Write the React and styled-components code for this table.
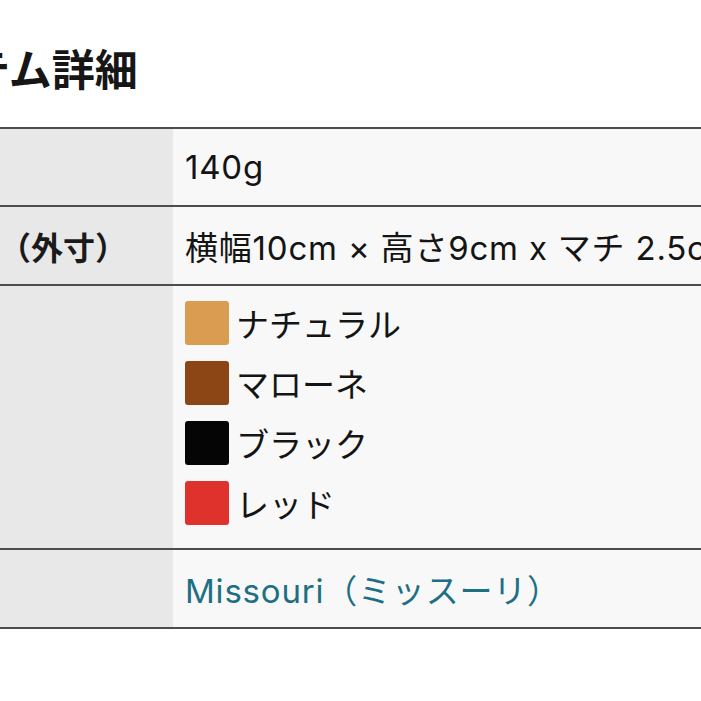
import styled, { createGlobalStyle } from 'styled-components'

const GlobalStyle = createGlobalStyle`
    html, body {
        margin: 0;
        padding: 0;
        background: #ffffff;
        overflow: hidden;
    }
    body {
        font-family: Inter, "Noto Sans CJK JP", sans-serif;
        color: #111111;
    }
`

const Page = styled.div`
    margin-left: -116px;
    padding-top: 41px;
    width: 1150px;
`

const Title = styled.h2`
    margin: 0 0 34px;
    font-family: "Noto Sans CJK JP", sans-serif;
    font-size: 43px;
    line-height: 52px;
    font-weight: 700;
    color: #161616;
`

const Table = styled.table`
    width: 100%;
    border-collapse: collapse;
    font-size: 33px;
`

const Row = styled.tr`
    border-top: 2px solid #4d4d4d;
    border-bottom: 2px solid #4d4d4d;
    height: ${props => props.$height}px;
`

const Label = styled.th`
    width: 269px;
    padding: 0 0 0 20px;
    background: #e8e8e8;
    text-align: left;
    font-weight: 700;
    font-family: "Noto Sans CJK JP", sans-serif;
    font-size: 32px;
    color: #1a1a1a;
    vertical-align: middle;
    white-space: nowrap;
`

const Value = styled.td`
    padding: 0 12px;
    background: #f8f8f8;
    vertical-align: middle;
    white-space: nowrap;
    letter-spacing: 0.8px;
    color: #141414;
`

const ColorList = styled.ul`
    list-style: none;
    margin: 0;
    padding: 0 0 8px;
    display: flex;
    flex-direction: column;
    gap: 16px;
`

const ColorItem = styled.li`
    display: flex;
    align-items: center;
    gap: 7px;
    font-family: "Noto Sans CJK JP", sans-serif;
    font-size: 33px;
    line-height: 44px;
    letter-spacing: 0;
`

const Swatch = styled.span`
    width: 44px;
    height: 44px;
    border-radius: 3px;
    background: ${props => props.$color};
    flex-shrink: 0;
`

const Link = styled.a`
    color: #1d7083;
    text-decoration: none;
`

const colors = [
    { name: 'ナチュラル', color: '#da9c51' },
    { name: 'マローネ', color: '#8c4514' },
    { name: 'ブラック', color: '#050505' },
    { name: 'レッド', color: '#e0322c' },
]

const App = () => {
    return (
        <Page>
            <GlobalStyle />
            <Title>アイテム詳細</Title>
            <Table>
                <tbody>
                    <Row $height={78}>
                        <Label>重さ</Label>
                        <Value>140g</Value>
                    </Row>
                    <Row $height={79}>
                        <Label>サイズ（外寸）</Label>
                        <Value>横幅10cm × 高さ9cm x マチ 2.5cm</Value>
                    </Row>
                    <Row $height={264}>
                        <Label>カラー</Label>
                        <Value>
                            <ColorList>
                                {colors.map(c => (
                                    <ColorItem key={c.name}>
                                        <Swatch $color={c.color} />
                                        {c.name}
                                    </ColorItem>
                                ))}
                            </ColorList>
                        </Value>
                    </Row>
                    <Row $height={79}>
                        <Label>素材</Label>
                        <Value><Link href="#">Missouri（ミッスーリ）</Link></Value>
                    </Row>
                </tbody>
            </Table>
        </Page>
    )
}

export default App
